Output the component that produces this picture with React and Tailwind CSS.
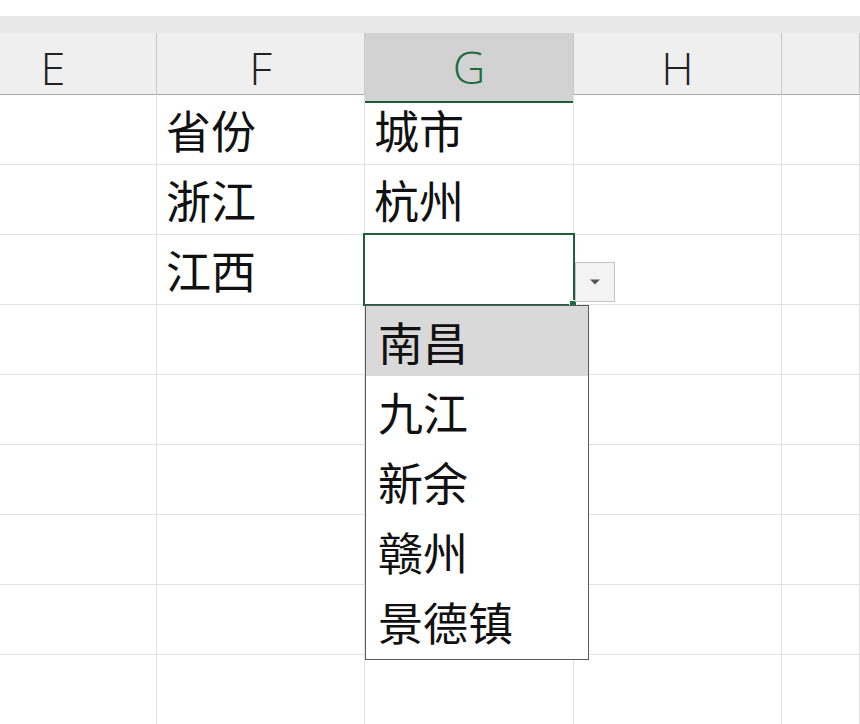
import React from "react";

const cols = ["E", "F", "G", "H", ""];
const rows = [
  ["", "省份", "城市", "", ""],
  ["", "浙江", "杭州", "", ""],
  ["", "江西", "", "", ""],
  ["", "", "", "", ""],
  ["", "", "", "", ""],
  ["", "", "", "", ""],
  ["", "", "", "", ""],
  ["", "", "", "", ""],
  ["", "", "", "", ""],
];
const items = ["南昌", "九江", "新余", "赣州", "景德镇"];
const cjk = { fontFamily: '"Noto Sans CJK SC", "Noto Sans", sans-serif' };

export default function App() {
  return (
    <div className="relative w-[860px] h-[724px] overflow-hidden bg-white">
      <div className="h-[16px] bg-white" />
      <div className="h-[17px] bg-[#e8e8e8]" />
      <div
        className="grid grid-cols-[157px_208px_209px_208px_1fr] h-[62px] bg-[#efefef] border-b border-[#a8a8a8]"
        style={{ fontFamily: '"Open Sans", "Liberation Sans", sans-serif' }}
      >
        {cols.map((c, i) => (
          <div
            key={i}
            className={`flex items-center justify-center text-[45px] font-light border-r border-[#c8c8c8] ${
              i === 0 ? "pr-[50px]" : ""
            } ${
              c === "G"
                ? "bg-[#d2d2d2] text-[#1d6b40] border-b-2 border-b-[#1e5e3a]"
                : "text-[#222]"
            }`}
          >
            {c}
          </div>
        ))}
      </div>
      <div style={cjk}>
        {rows.map((r, ri) => (
          <div
            key={ri}
            className="grid grid-cols-[157px_208px_209px_208px_1fr] h-[70px]"
          >
            {r.map((t, ci) => (
              <div
                key={ci}
                className="flex items-center pl-[9px] text-[45px] text-[#111] border-r border-b border-[#e2e2e2] leading-none"
              >
                {t}
              </div>
            ))}
          </div>
        ))}
      </div>

      {/* selected cell */}
      <div className="absolute left-[363px] top-[233px] w-[212px] h-[73px] border-2 border-[#1e5e3a]" />
      <div className="absolute left-[569px] top-[300px] w-[8px] h-[7px] bg-[#1e6b40] border border-white" />

      {/* dropdown button */}
      <div className="absolute left-[575px] top-[262px] w-[40px] h-[40px] bg-[#f3f3f3] border border-[#c4c4c4] flex items-center justify-center">
        <svg width="12" height="8" viewBox="0 0 12 8">
          <path d="M1 1.5 H11 L6 6.5 Z" fill="#555" />
        </svg>
      </div>

      {/* dropdown list */}
      <div
        className="absolute left-[365px] top-[305px] w-[224px] h-[355px] bg-white border border-[#5a5a5a]"
        style={cjk}
      >
        {items.map((t, i) => (
          <div
            key={i}
            className={`h-[70px] flex items-center pl-[12px] text-[45px] text-[#111] leading-none ${
              i === 0 ? "bg-[#d9d9d9]" : ""
            }`}
          >
            {t}
          </div>
        ))}
      </div>
    </div>
  );
}
